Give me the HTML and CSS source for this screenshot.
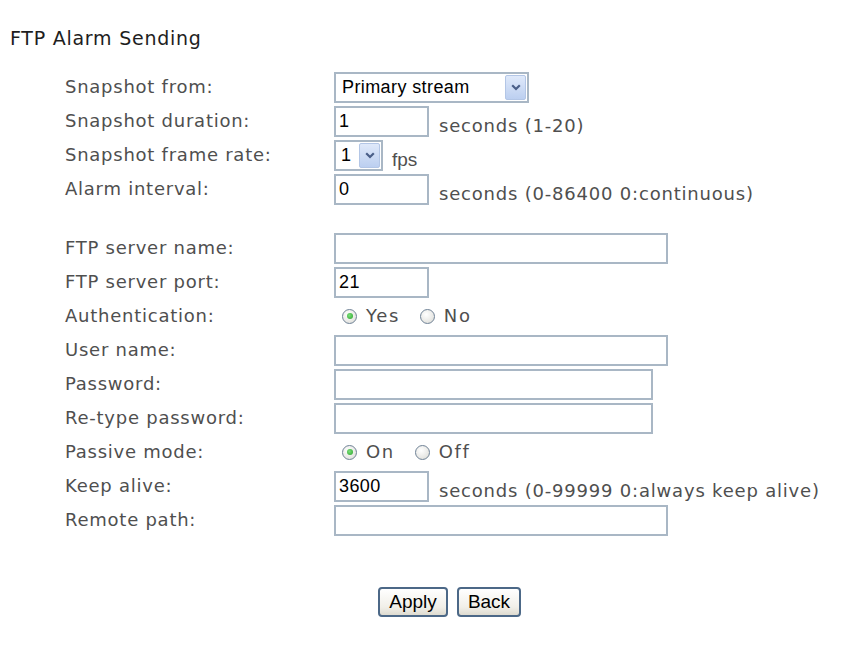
FILE: index.html
```html
<!DOCTYPE html>
<html>
<head>
<meta charset="utf-8">
<title>FTP Alarm Sending</title>
<link rel="stylesheet" href="styles.css">
</head>
<body>
<div class="page">
  <h1 class="title">FTP Alarm Sending</h1>
  <div class="form">
    <div class="group">
      <div class="row">
        <span class="label">Snapshot from:</span>
        <div class="ctl">
          <span class="sel sel-stream">
            <select><option>Primary stream</option></select>
            <span class="arrow"><svg width="10" height="7" viewBox="0 0 10 7"><path d="M1.2 1.2 L5 5 L8.8 1.2" fill="none" stroke="#4a5f88" stroke-width="2.2"/></svg></span>
          </span>
        </div>
      </div>
      <div class="row">
        <span class="label">Snapshot duration:</span>
        <div class="ctl"><input class="in in-m" type="text" value="1"><span class="note">seconds (1-20)</span></div>
      </div>
      <div class="row">
        <span class="label">Snapshot frame rate:</span>
        <div class="ctl">
          <span class="sel sel-fps">
            <select><option>1</option></select>
            <span class="arrow"><svg width="10" height="7" viewBox="0 0 10 7"><path d="M1.2 1.2 L5 5 L8.8 1.2" fill="none" stroke="#4a5f88" stroke-width="2.2"/></svg></span>
          </span>
          <span class="unit">fps</span>
        </div>
      </div>
      <div class="row">
        <span class="label">Alarm interval:</span>
        <div class="ctl"><input class="in in-m" type="text" value="0"><span class="note">seconds (0-86400 0:continuous)</span></div>
      </div>
    </div>

    <div class="group group2">
      <div class="row">
        <span class="label">FTP server name:</span>
        <div class="ctl"><input class="in in-l" type="text" value=""></div>
      </div>
      <div class="row">
        <span class="label">FTP server port:</span>
        <div class="ctl"><input class="in in-m" type="text" value="21"></div>
      </div>
      <div class="row">
        <span class="label">Authentication:</span>
        <div class="ctl radios">
          <span class="radio on"></span><span class="rtext">Yes</span>
          <span class="radio"></span><span class="rtext">No</span>
        </div>
      </div>
      <div class="row">
        <span class="label">User name:</span>
        <div class="ctl"><input class="in in-l" type="text" value=""></div>
      </div>
      <div class="row">
        <span class="label">Password:</span>
        <div class="ctl"><input class="in in-p" type="password" value=""></div>
      </div>
      <div class="row">
        <span class="label">Re-type password:</span>
        <div class="ctl"><input class="in in-p" type="password" value=""></div>
      </div>
      <div class="row">
        <span class="label">Passive mode:</span>
        <div class="ctl radios">
          <span class="radio on"></span><span class="rtext">On</span>
          <span class="radio"></span><span class="rtext">Off</span>
        </div>
      </div>
      <div class="row">
        <span class="label">Keep alive:</span>
        <div class="ctl"><input class="in in-m" type="text" value="3600"><span class="note">seconds (0-99999 0:always keep alive)</span></div>
      </div>
      <div class="row">
        <span class="label">Remote path:</span>
        <div class="ctl"><input class="in in-l" type="text" value=""></div>
      </div>
    </div>
  </div>
  <div class="buttons">
    <button class="btn btn-apply" type="button">Apply</button>
    <button class="btn btn-back" type="button">Back</button>
  </div>
</div>
</body>
</html>
```
FILE: styles.css
```css
html, body {
  margin: 0;
  padding: 0;
  background: #ffffff;
}
body {
  font-family: "DejaVu Sans", Verdana, sans-serif;
}
.page {
  padding: 26px 0 0 10px;
}
.title {
  margin: 0;
  font-size: 19px;
  font-weight: normal;
  line-height: 24px;
  letter-spacing: 0.75px;
  color: #1e1e1e;
}
.form {
  margin-top: 20px;
  padding-left: 55px;
}
.group2 {
  margin-top: 25px;
}
.row {
  display: grid;
  grid-template-columns: 269px auto;
  height: 34px;
  align-items: center;
}
.label {
  font-size: 18px;
  letter-spacing: 0.75px;
  color: #4f4f4f;
  line-height: 22px;
}
.ctl {
  display: flex;
  align-items: flex-end;
  height: 31px;
}
.in {
  box-sizing: border-box;
  height: 31px;
  margin: 0;
  padding: 0 3px;
  border: 2px solid #a9b7c5;
  background: #fff;
  font-family: "Liberation Sans", Arial, sans-serif;
  font-size: 18px;
  letter-spacing: 0.4px;
  color: #000;
  outline: none;
}
.in-m { width: 95px; }
.in-l { width: 334px; }
.in-p { width: 319px; }
.note {
  margin-left: 10px;
  font-size: 18px;
  letter-spacing: 0.8px;
  line-height: 22px;
  color: #4f4f4f;
}
.unit {
  margin-left: 9px;
  font-family: "Liberation Sans", Arial, sans-serif;
  font-size: 19px;
  line-height: 22px;
  color: #4f4f4f;
}
.sel {
  position: relative;
  display: inline-block;
  height: 31px;
}
.sel select {
  box-sizing: border-box;
  height: 31px;
  margin: 0;
  padding: 0 0 0 6px;
  border: 2px solid #a9b7c5;
  background: #fff;
  font-family: "Liberation Sans", Arial, sans-serif;
  font-size: 18px;
  letter-spacing: 0.4px;
  color: #000;
  appearance: none;
  -webkit-appearance: none;
  border-radius: 0;
  outline: none;
}
.sel-stream select { width: 195px; }
.sel-fps select { width: 49px; padding-left: 5px; }
.arrow {
  position: absolute;
  top: 3px;
  right: 3px;
  width: 21px;
  height: 25px;
  box-sizing: border-box;
  border: 1px solid #b3c6e6;
  border-radius: 2px;
  background: linear-gradient(#dfe9fa, #bccff0);
  display: flex;
  align-items: center;
  justify-content: center;
  pointer-events: none;
}
.radios {
  align-items: center;
  padding-left: 8px;
}
.radio {
  box-sizing: border-box;
  width: 15px;
  height: 15px;
  border: 1px solid #6f8296;
  border-radius: 50%;
  background: radial-gradient(circle at 40% 35%, #ffffff 0%, #e9e9e6 60%, #d6d6d0 100%);
  display: flex;
  align-items: center;
  justify-content: center;
}
.radio.on::after {
  content: "";
  width: 6px;
  height: 6px;
  border-radius: 50%;
  background: radial-gradient(circle at 40% 40%, #7be07b, #2aa12a);
}
.rtext {
  margin-left: 9px;
  margin-right: 20px;
  font-size: 18px;
  letter-spacing: 1.6px;
  line-height: 22px;
  color: #4f4f4f;
}
.buttons {
  display: flex;
  justify-content: center;
  gap: 9px;
  margin-top: 50px;
  padding-left: 24px;
}
.btn {
  box-sizing: border-box;
  height: 30px;
  margin: 0;
  padding: 0;
  border: 2px solid #4c6887;
  border-radius: 4px;
  background: linear-gradient(#ffffff, #f1efe8 70%, #dedbd0);
  font-family: "Liberation Sans", Arial, sans-serif;
  font-size: 19px;
  color: #000;
}
.btn-apply { width: 70px; }
.btn-back { width: 64px; }
```
